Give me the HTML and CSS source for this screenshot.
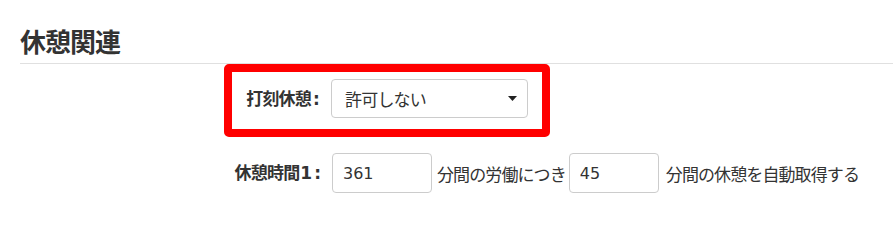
FILE: index.html
```html
<!DOCTYPE html>
<html lang="ja">
<head>
<meta charset="utf-8">
<title>休憩関連</title>
<link rel="stylesheet" href="styles.css">
</head>
<body>
<section class="section">
  <h2 class="section-title">休憩関連</h2>
  <div class="highlight">
    <div class="form-row">
      <label class="form-label form-label--stamp">打刻休憩<span class="label-colon">:</span></label>
      <div class="select">
        <span class="select-value">許可しない</span>
        <svg class="select-caret" width="9" height="5" viewBox="0 0 9 5"><path d="M0 0H9L4.5 5Z" fill="#222"/></svg>
      </div>
    </div>
  </div>
  <div class="form-row form-row--time">
    <label class="form-label form-label--time">休憩時間<span class="label-num">1:</span></label>
    <input class="text-input text-input--wide" type="text" value="361">
    <span class="inline-text inline-text--first">分間の労働につき</span>
    <input class="text-input text-input--narrow" type="text" value="45">
    <span class="inline-text inline-text--last">分間の休憩を自動取得する</span>
  </div>
</section>
</body>
</html>
```

FILE: styles.css
```css
html, body {
  margin: 0;
  padding: 0;
  background: #fff;
}

body {
  font-family: "DejaVu Sans", "Noto Sans CJK JP", sans-serif;
  color: #333;
  font-size: 16px;
}

.section {
  margin-left: 20px;
}

.section-title {
  margin: 0;
  padding: 22px 0 4px 0;
  font-family: "Noto Sans CJK JP", sans-serif;
  font-size: 26px;
  letter-spacing: -1px;
  line-height: 37px;
  font-weight: bold;
  color: #333;
  border-bottom: 1px solid #e0e0e0;
}

.highlight {
  box-sizing: border-box;
  width: 326px;
  margin-left: 204px;
  border: 8px solid #ff0000;
  border-radius: 5px;
  padding: 7px 14px 11px 14px;
}

.form-row {
  display: flex;
  align-items: center;
}

.form-label {
  font-weight: bold;
  font-size: 17px;
  letter-spacing: -0.8px;
  line-height: 20px;
  text-align: right;
  white-space: nowrap;
  color: #333;
}

.label-colon {
  margin-left: 2px;
}

.label-num {
  letter-spacing: 2px;
  margin-left: 1px;
  margin-right: -2px;
}

.form-label--stamp {
  width: 73px;
  margin-right: 12px;
}

.select {
  box-sizing: border-box;
  width: 197px;
  height: 39px;
  border: 1px solid #ccc;
  border-radius: 4px;
  display: flex;
  align-items: center;
  justify-content: space-between;
  padding: 0 10px 0 13px;
  background: #fff;
}

.select-value {
  font-size: 17px;
  letter-spacing: -0.8px;
  color: #333;
}

.form-row--time {
  margin-top: 16px;
}

.form-label--time {
  width: 301px;
  margin-right: 11px;
}

.text-input {
  box-sizing: border-box;
  height: 40px;
  border: 1px solid #ccc;
  border-radius: 4px;
  padding: 0 10px;
  font-family: "DejaVu Sans", "Noto Sans CJK JP", sans-serif;
  font-size: 16px;
  color: #333;
  background: #fff;
  outline: none;
}

.text-input--wide {
  width: 100px;
}

.text-input--narrow {
  width: 90px;
}

.inline-text {
  font-size: 17px;
  letter-spacing: -0.9px;
  color: #333;
  white-space: nowrap;
}

.inline-text--first {
  margin: 0 3px 0 5px;
}

.inline-text--last {
  margin-left: 7px;
}
```
